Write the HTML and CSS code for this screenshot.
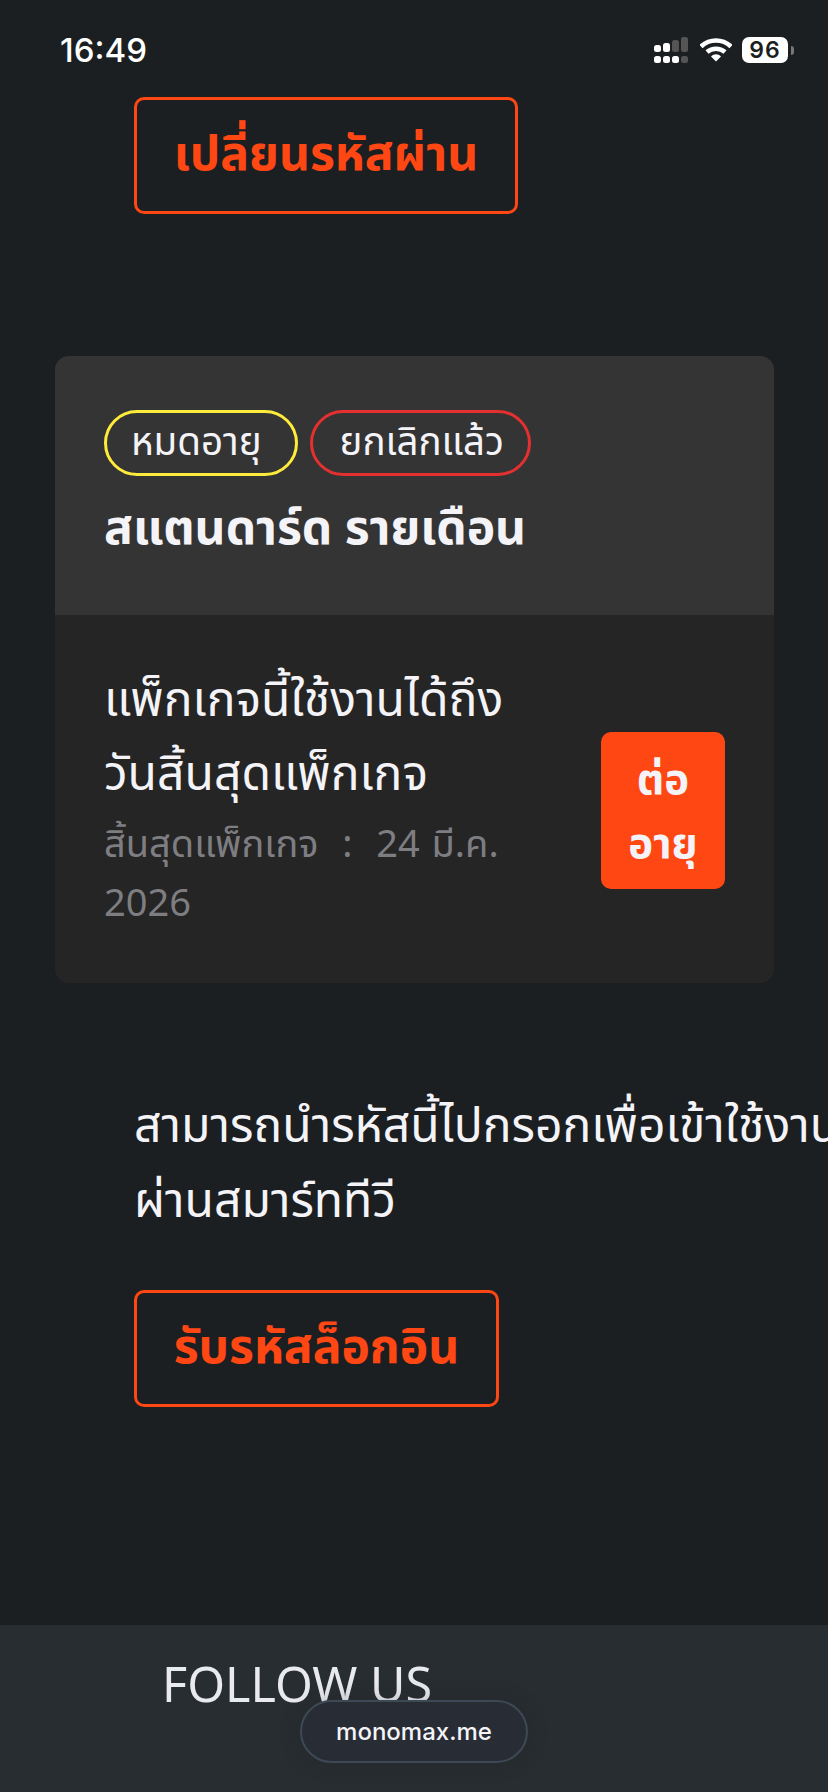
FILE: index.html
```html
<!DOCTYPE html>
<html lang="th">
<head>
    <meta charset="UTF-8">
    <meta name="viewport" content="width=device-width, initial-scale=1.0">
    <title>Monomax</title>
    <link rel="stylesheet" href="styles.css">
</head>
<body>
    <div class="status-bar">
        <span class="time">16:49</span>
        <div class="status-icons">
            <svg class="signal" width="34" height="26" viewBox="0 0 34 26">
                <rect x="0" y="8" width="7" height="7" rx="2.5" fill="#fff"/>
                <rect x="9" y="6" width="7" height="9" rx="2.5" fill="#fff"/>
                <rect x="18" y="3" width="7" height="12" rx="2.5" fill="#555"/>
                <rect x="27" y="0" width="7" height="15" rx="2.5" fill="#555"/>
                <rect x="0" y="19" width="7" height="7" rx="2.5" fill="#fff"/>
                <rect x="9" y="19" width="7" height="7" rx="2.5" fill="#fff"/>
                <rect x="18" y="19" width="7" height="7" rx="2.5" fill="#fff"/>
                <rect x="27" y="19" width="7" height="7" rx="2.5" fill="#555"/>
            </svg>
            <svg class="wifi" width="32" height="24" viewBox="0 0 32 24">
                <path d="M1 8.5C9.5 .5 22.500 .5 31 8.500" fill="none" stroke="#fff" stroke-width="4.500"/>
                <path d="M7 14C12 9.500 20 9.500 25 14" fill="none" stroke="#fff" stroke-width="4.500"/>
                <path d="M11 18.500C14 15.500 18 15.500 21 18.500L16 23.500Z" fill="#fff"/>
            </svg>
            <div class="battery">96</div>
            <div class="battery-tip"></div>
        </div>
    </div>

    <div class="section-top">
        <button class="btn-outline btn-password">เปลี่ยนรหัสผ่าน</button>
    </div>

    <div class="card">
        <div class="card-head">
            <div class="tags">
                <span class="tag tag-yellow">หมดอายุ</span>
                <span class="tag tag-red">ยกเลิกแล้ว</span>
            </div>
            <h2 class="plan-name">สแตนดาร์ด รายเดือน</h2>
        </div>
        <div class="card-body">
            <div class="card-info">
                <p class="info-title">แพ็กเกจนี้ใช้งานได้ถึง<br>วันสิ้นสุดแพ็กเกจ</p>
                <p class="info-date">สิ้นสุดแพ็กเกจ &nbsp;:&nbsp; 24 มี.ค. 2026</p>
            </div>
            <button class="btn-renew">ต่ออายุ</button>
        </div>
    </div>

    <div class="tv-section">
        <p class="tv-text">สามารถนำรหัสนี้ไปกรอกเพื่อเข้าใช้งานบน<br>ผ่านสมาร์ททีวี</p>
        <button class="btn-outline btn-code">รับรหัสล็อกอิน</button>
    </div>

    <div class="footer">
        <div class="follow">FOLLOW US</div>
    </div>

    <div class="url-pill">monomax.me</div>
</body>
</html>
```

FILE: styles.css
```css
body {
    font-family: "Noto Sans", "Noto Sans Thai", "Open Sans", sans-serif;
    margin: 0;
    padding: 0;
    width: 828px;
    height: 1792px;
    overflow: hidden;
    position: relative;
    display: flex;
    flex-direction: column;
    background-color: #1c1f22;
    color: #f4f4f8;
}
p, h2 {
    margin: 0;
}
button {
    font-family: inherit;
    cursor: pointer;
}
.status-bar {
    height: 97px;
    padding: 0 34px 0 60px;
    box-sizing: border-box;
    display: flex;
    justify-content: space-between;
    align-items: flex-start;
}
.time {
    font-family: Inter, sans-serif;
    font-size: 33px;
    font-weight: 500;
    color: #fff;
    margin-top: 30px;
    line-height: 40px;
}
.status-icons {
    display: flex;
    align-items: center;
    margin-top: 37px;
}
.signal {
    margin-right: 12px;
}
.wifi {
    margin-right: 10px;
}
.battery {
    width: 46px;
    height: 26px;
    background: #fff;
    border-radius: 7px;
    color: #1c1f22;
    font-family: Inter, sans-serif;
    font-size: 23px;
    font-weight: 600;
    letter-spacing: 1px;
    line-height: 26px;
    text-align: center;
}
.battery-tip {
    width: 3px;
    height: 9px;
    margin-left: 3px;
    background: #777;
    border-radius: 0 3px 3px 0;
}
.section-top {
    padding-left: 134px;
}
.btn-outline {
    height: 117px;
    background: none;
    border: 3px solid #ff4714;
    border-radius: 10px;
    color: #ff4714;
    font-size: 48px;
    font-weight: 700;
    padding: 0;
    display: block;
}
.btn-password {
    width: 384px;
}
.btn-code {
    width: 365px;
}
.card {
    margin: 142px 54px 0 55px;
    border-radius: 14px;
    overflow: hidden;
    background: #252525;
}
.card-head {
    height: 259px;
    box-sizing: border-box;
    background: #343434;
    padding: 54px 49px 0;
}
.tags {
    display: flex;
    gap: 12px;
}
.tag {
    height: 66px;
    box-sizing: border-box;
    border-radius: 33px;
    display: flex;
    align-items: center;
    font-size: 38.5px;
    color: #f4f4f8;
}
.tag-yellow {
    border: 3px solid #ffeb3b;
    padding: 0 33px 0 24px;
}
.tag-red {
    border: 3px solid #e53030;
    padding: 0 24px 0 27px;
}
.plan-name {
    font-size: 48px;
    font-weight: 700;
    line-height: 66px;
    margin-top: 17px;
}
.card-body {
    height: 368px;
    box-sizing: border-box;
    padding: 0 49px;
    display: flex;
    align-items: center;
    justify-content: space-between;
}
.card-info {
    width: 420px;
    margin-bottom: 6px;
}
.info-title {
    font-size: 48px;
    line-height: 74px;
}
.info-date {
    font-size: 38px;
    word-spacing: 2px;
    line-height: 59px;
    margin-top: 4px;
    color: #7e7e82;
}
.btn-renew {
    width: 124px;
    height: 157px;
    margin-top: 22px;
    background: #ff4714;
    border: none;
    border-radius: 10px;
    color: #f4f4f8;
    font-size: 42px;
    font-weight: 700;
    line-height: 64px;
    padding: 0 24px;
}
.tv-section {
    padding: 103px 0 0 134px;
}
.tv-text {
    font-size: 48px;
    line-height: 75px;
    white-space: nowrap;
    margin-bottom: 54px;
}
.footer {
    position: absolute;
    left: 0;
    right: 0;
    bottom: 0;
    height: 167px;
    background: #282d31;
    padding: 28px 0 0 162px;
    box-sizing: border-box;
}
.follow {
    font-size: 48.5px;
    line-height: 60px;
    color: #e8eaf0;
}
.url-pill {
    position: absolute;
    left: 300px;
    top: 1700px;
    width: 228px;
    height: 63px;
    box-sizing: border-box;
    border: 2px solid #3d4954;
    border-radius: 32px;
    background: #282c35;
    box-shadow: 0 0 20px rgba(30, 30, 30, 0.25);
    text-align: center;
    line-height: 59px;
    font-family: Inter, sans-serif;
    font-size: 24px;
    font-weight: 500;
    color: #f4f4f8;
}
```
